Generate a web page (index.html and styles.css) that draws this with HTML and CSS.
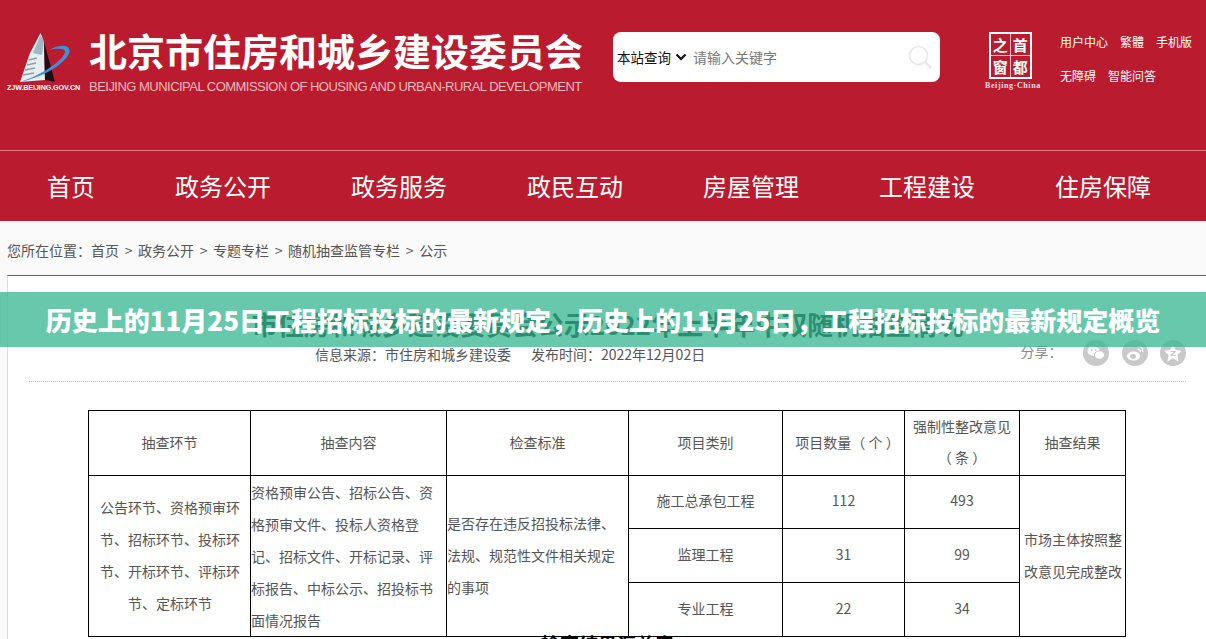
FILE: index.html
```html
<!DOCTYPE html>
<html lang="zh-CN">
<head>
<meta charset="utf-8">
<title>北京市住房和城乡建设委员会</title>
<link rel="stylesheet" href="styles.css">
</head>
<body>
<header class="masthead">
  <div class="brand">
    <div class="emblem">
      <svg class="emblem-art" width="50" height="49" viewBox="0 0 50 49">
        <path d="M20.5 0 L10 20 L0 49 L25 47 L24 8 Z" fill="#e6eef2"/>
        <path d="M20.5 2 L13 20 L22 22 L24 8 Z" fill="#9fb8c6"/>
        <path d="M3 42 L14 40 M5 37 L15 35 M7 32 L16 30 M9 27 L17 25" stroke="#8f9ea8" stroke-width="1.4" fill="none"/>
        <path d="M21.5 0 L35 49 L25 47 L24 8 Z" fill="#1c1014"/>
        <path d="M29 17 C38 12 48 11 49.5 17 C51 25 30 43 0 49 C20 43 44 27 45 19 C45.5 15.5 38 15 29 17 Z" fill="#3f8fd6"/>
      </svg>
      <span class="emblem-url">ZJW.BEIJING.GOV.CN</span>
    </div>
    <div class="brand-text">
      <div class="brand-cn">北京市住房和城乡建设委员会</div>
      <div class="brand-en">BEIJING MUNICIPAL COMMISSION OF HOUSING AND URBAN-RURAL DEVELOPMENT</div>
    </div>
  </div>
  <div class="search">
    <span class="scope">本站查询</span>
    <svg class="chevron" width="12" height="8" viewBox="0 0 12 8"><path d="M1.5 1.5 L6 6 L10.5 1.5" fill="none" stroke="#111" stroke-width="2.2"/></svg>
    <span class="placeholder">请输入关键字</span>
    <svg class="magnifier" width="24" height="24" viewBox="0 0 24 24"><circle cx="10.5" cy="10.5" r="9" fill="none" stroke="#e9ebeb" stroke-width="2"/><path d="M17 17 L23 23" stroke="#e9ebeb" stroke-width="2.6"/></svg>
  </div>
  <div class="capital">
    <div class="capital-grid">
      <span>之</span><span>首</span><span>窗</span><span>都</span>
    </div>
    <div class="capital-label">Beijing-China</div>
  </div>
  <div class="toplinks">
    <div class="toplinks-row"><a>用户中心</a><a>繁體</a><a>手机版</a></div>
    <div class="toplinks-row"><a>无障碍</a><a>智能问答</a></div>
  </div>
</header>
<nav class="mainnav">
  <a>首页</a><a>政务公开</a><a>政务服务</a><a>政民互动</a><a>房屋管理</a><a>工程建设</a><a>住房保障</a>
</nav>
<div class="crumbs">您所在位置&#xFF1A;首页 &gt; 政务公开 &gt; 专题专栏 &gt; 随机抽查监管专栏 &gt; 公示</div>
<main class="article">
  <h1 class="article-title">市住房和城乡建设委员会公示2022年上半年中双随机抽查情况</h1>
  <div class="meta">
    <div class="meta-info"><span>信息来源&#xFF1A;市住房和城乡建设委</span><span>发布时间&#xFF1A;2022年12月02日</span></div>
    <div class="share">
      <span class="share-label">分享&#xFF1A;</span>
      <svg class="share-icon" width="26" height="26" viewBox="0 0 26 26"><circle cx="13" cy="13" r="13" fill="#c9c9c9"/><ellipse cx="10.5" cy="11" rx="6" ry="5" fill="#fff"/><ellipse cx="16.5" cy="15" rx="5" ry="4.2" fill="#fff" stroke="#c9c9c9"/><circle cx="8.5" cy="10" r=".9" fill="#c9c9c9"/><circle cx="12.5" cy="10" r=".9" fill="#c9c9c9"/></svg>
      <svg class="share-icon" width="26" height="26" viewBox="0 0 26 26"><circle cx="13" cy="13" r="13" fill="#c9c9c9"/><ellipse cx="11.5" cy="16" rx="6.5" ry="4.6" fill="#fff"/><ellipse cx="11" cy="16.4" rx="3" ry="2.4" fill="#c9c9c9"/><path d="M15 6.5 C19 5.5 21.5 8 20.6 12 M15.5 9.5 C17.5 9 18.5 10 18 12" fill="none" stroke="#fff" stroke-width="1.4"/></svg>
      <svg class="share-icon" width="26" height="26" viewBox="0 0 26 26"><circle cx="13" cy="13" r="13" fill="#c9c9c9"/><path d="M13 4 L15.7 10 L22 10.7 L17.3 15 L18.6 21.5 L13 18.2 L7.4 21.5 L8.7 15 L4 10.7 L10.3 10 Z" fill="#fff"/><path d="M10.5 11.5 H15 L11 15.5 H15.5" fill="none" stroke="#c9c9c9" stroke-width="1.2"/></svg>
    </div>
  </div>
  <table class="report">
    <colgroup>
      <col class="c1"><col class="c2"><col class="c3"><col class="c4"><col class="c5"><col class="c6"><col class="c7">
    </colgroup>
    <tr class="head">
      <td>抽查环节</td><td>抽查内容</td><td>检查标准</td><td>项目类别</td><td class="count">项目数量&#xFF08; 个 &#xFF09;</td><td class="stack">强制性整改意见<br>&#xFF08; 条 &#xFF09;</td><td>抽查结果</td>
    </tr>
    <tr class="r1">
      <td rowspan="3" class="pad">公告环节、资格预审环节、招标环节、投标环节、开标环节、评标环节、定标环节</td>
      <td rowspan="3" class="left dense">资格预审公告、招标公告、资格预审文件、投标人资格登记、招标文件、开标记录、评标报告、中标公示、招投标书面情况报告</td>
      <td rowspan="3" class="left">是否存在违反招投标法律、法规、规范性文件相关规定的事项</td>
      <td>施工总承包工程</td><td>112</td><td>493</td>
      <td rowspan="3" class="pad">市场主体按照整改意见完成整改</td>
    </tr>
    <tr class="r2"><td>监理工程</td><td>31</td><td>99</td></tr>
    <tr class="r3"><td>专业工程</td><td>22</td><td>34</td></tr>
  </table>
  <h2 class="subhead">检查结果汇总表</h2>
</main>
<div class="banner">历史上的11月25日工程招标投标的最新规定&#xFF0C;历史上的11月25日&#xFF0C;工程招标投标的最新规定概览</div>
</body>
</html>
```
FILE: styles.css
```css
* { box-sizing: border-box; }
html, body { margin: 0; padding: 0; }
body {
  position: relative;
  width: 1206px;
  height: 639px;
  overflow: hidden;
  background: #fafafa;
  color: #555;
  font-family: "Noto Sans CJK SC", "Noto Sans", sans-serif;
  font-size: 14px;
}
.masthead {
  display: flex;
  align-items: flex-start;
  height: 150px;
  background: #bb1b2e;
  color: #fff;
}
.brand { display: flex; width: 613px; padding-top: 30px; }
.emblem { display: flex; flex-direction: column; width: 89px; padding: 3px 0 0 7px; }
.emblem-art { display: block; margin-left: 13px; }
.emblem-url {
  margin-top: 1px;
  font-family: "Liberation Sans", sans-serif;
  font-size: 7.2px;
  font-weight: 700;
  line-height: 10px;
  letter-spacing: -.12px;
  white-space: nowrap;
}
.brand-cn {
  font-size: 38px;
  font-weight: 700;
  line-height: 40px;
  white-space: nowrap;
}
.brand-en {
  margin-top: 9px;
  color: #eeb9bf;
  font-family: "Liberation Sans", sans-serif;
  font-size: 13px;
  line-height: 16px;
  letter-spacing: -.52px;
  white-space: nowrap;
}
.search {
  display: flex;
  align-items: center;
  width: 327px;
  height: 50px;
  margin-top: 32px;
  padding: 0 8px 0 4px;
  background: #fff;
  border-radius: 8px;
  color: #111;
}
.scope { font-size: 13.5px; }
.chevron { margin: 0 6px 0 4px; }
.placeholder { color: #777; }
.magnifier { margin-left: auto; }
.capital { width: 75px; margin: 32px 0 0 45px; }
.capital-grid {
  display: grid;
  grid-template-columns: 1fr 1fr;
  width: 43px;
  height: 47px;
  margin-left: 4px;
  border: 2px solid #fff;
  font-size: 15px;
  font-weight: 700;
  line-height: 21px;
  text-align: center;
  color: #fff;
}
.capital-grid span:nth-child(odd) { border-right: 1px solid #f0c0c5; }
.capital-grid span:nth-child(-n+2) { border-bottom: 1px solid #f0c0c5; }
.capital-label {
  margin-top: 2px;
  color: #f5dde0;
  font-family: "Liberation Serif", serif;
  font-size: 8px;
  font-weight: 700;
  line-height: 10px;
  letter-spacing: .6px;
  white-space: nowrap;
}
.toplinks { padding-top: 33px; font-size: 12px; line-height: 18px; }
.toplinks-row { display: flex; gap: 12px; height: 34px; white-space: nowrap; }
.mainnav {
  display: flex;
  gap: 80px;
  height: 71px;
  padding-left: 47px;
  background: #bb1b2e;
  border-top: 1px solid #e5787f;
  color: #fff;
  font-size: 24px;
  line-height: 70px;
}
.crumbs {
  height: 54px;
  padding: 19px 0 0 7px;
  line-height: 20px;
  white-space: nowrap;
  word-spacing: 2.5px;
}
.article {
  height: 364px;
  margin-left: 7px;
  padding: 0 20px 0 21px;
  background: #fff;
  border-top: 1px solid #b5404c;
  border-left: 1px solid #ddd;
}
.article-title {
  margin: 32px 0 0;
  color: #000;
  font-size: 26px;
  font-weight: 700;
  line-height: 32px;
  text-align: center;
  white-space: nowrap;
}
.meta {
  display: flex;
  justify-content: space-between;
  height: 42px;
  border-bottom: 1px dotted #bbb;
}
.meta-info { display: flex; gap: 20px; margin: 4px 0 0 286px; line-height: 20px; }
.share { display: flex; align-items: flex-start; gap: 12.5px; }
.share-label { margin-right: 8px; color: #888; line-height: 22px; }
.report {
  width: 1037px;
  margin: 28px 0 0 59px;
  border-collapse: collapse;
  table-layout: fixed;
  line-height: 32px;
  text-align: center;
}
.report td { padding: 0 0 4px; border: 1px solid #000; }
.report .head td { padding-bottom: 3px; }
.report .head .count { padding-left: 8px; }
.report .head .stack { padding-bottom: 2px; line-height: 31px; }
.report td[rowspan] { padding-bottom: 2px; }
.report td.dense { padding-bottom: 0; }
.report .left { text-align: left; }
.report .pad { padding-left: 4px; padding-right: 3px; }
.c1 { width: 162px; }
.c2 { width: 196px; }
.c3 { width: 182px; }
.c4 { width: 154px; }
.c5 { width: 122px; }
.c6 { width: 115px; }
.c7 { width: 106px; }
.head { height: 65px; }
.r1 { height: 53px; }
.r2, .r3 { height: 54px; }
.subhead {
  margin: -3px 0 0;
  color: #000;
  font-size: 19px;
  font-weight: 700;
  line-height: 20px;
  text-align: center;
  white-space: nowrap;
}
.banner {
  position: absolute;
  left: 0;
  top: 292px;
  width: 100%;
  height: 55px;
  background: rgba(59, 184, 147, .77);
  color: #fff;
  font-size: 26px;
  font-weight: 900;
  line-height: 55px;
  text-align: center;
  white-space: nowrap;
}
```
